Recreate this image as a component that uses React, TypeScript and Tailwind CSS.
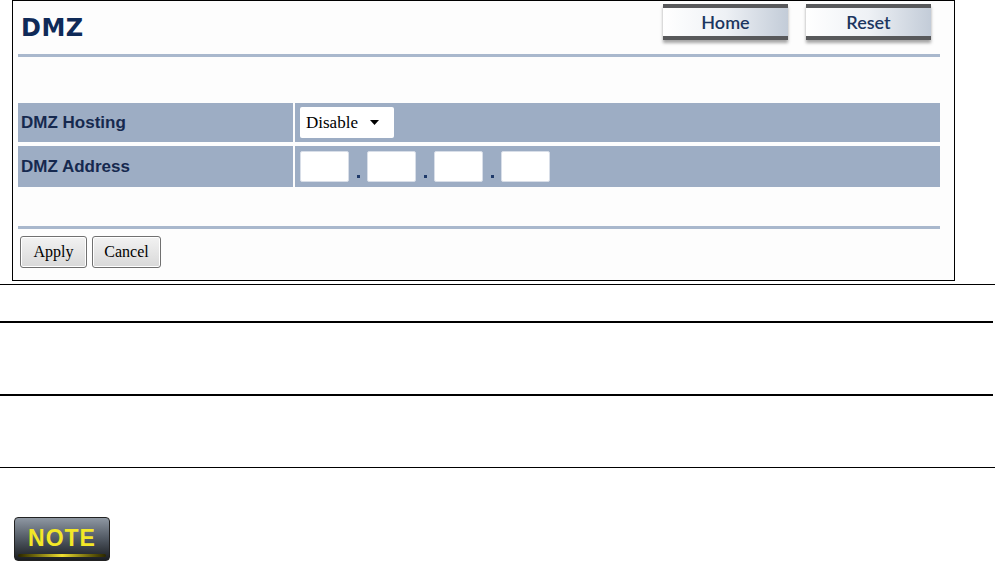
import React from 'react';

const HeadButton: React.FC<{ label: string }> = ({ label }) => (
  <div className="w-[125px] h-[36px] flex flex-col shadow-[0_3px_3px_rgba(0,0,0,0.35)]">
    <div className="h-[4px] bg-[#58595b]" />
    <div className="flex-1 flex items-center justify-center bg-gradient-to-r from-[#ffffff] via-[#eef1f5] to-[#c3ccd8] text-[#1c3660] text-[18px] font-semibold font-['Lato',sans-serif] leading-none">
      {label}
    </div>
    <div className="h-[4px] bg-[#58595b]" />
  </div>
);

const Octet: React.FC = () => (
  <div className="w-[49px] h-[31px] bg-white rounded-[2px] border border-[#d8dee8]" />
);

const Dot: React.FC = () => (
  <div className="w-[18px] h-[31px] flex items-end justify-center pb-[4px]">
    <div className="w-[3px] h-[3px] bg-[#1f3a6a]" />
  </div>
);

const FormButton: React.FC<{ label: string; width: string }> = ({ label, width }) => (
  <div
    className={`${width} h-[32px] flex items-center justify-center rounded-[3px] border border-[#707070] bg-gradient-to-b from-[#f2f2f2] to-[#d9d9d9] text-[16px] text-black font-['Liberation_Serif',serif] shadow-[inset_0_0_0_1px_#ffffff]`}
  >
    {label}
  </div>
);

export default function App() {
  return (
    <div className="w-[995px] h-[562px] bg-white overflow-hidden font-['Liberation_Sans',Arial,sans-serif]">
      <div className="pl-[12px]">
        <div className="w-[943px] h-[281px] border border-black bg-[#fdfdfd]">
          <div className="ml-[5px] w-[922px]">
            {/* header */}
            <div className="h-[53px] flex justify-between">
              <div className="pl-[3px] pt-[13px] text-[24px] leading-[29px] font-bold text-[#0f2a58] font-['DejaVu_Sans',Verdana,sans-serif] tracking-[0.5px]">
                DMZ
              </div>
              <div className="flex gap-[18px] pt-[3px] pr-[9px]">
                <HeadButton label="Home" />
                <HeadButton label="Reset" />
              </div>
            </div>
            <div className="h-[3px] bg-[#a9b8cd]" />

            {/* table */}
            <div className="mt-[46px] flex flex-col gap-[4px]">
              <div className="h-[39px] flex gap-[2px]">
                <div className="w-[275px] bg-[#9dadc4] flex items-center pl-[3px] text-[17px] font-bold text-[#16294f]">
                  DMZ Hosting
                </div>
                <div className="flex-1 bg-[#9dadc4] flex items-center pl-[5px]">
                  <div className="w-[94px] h-[31px] bg-white rounded-[2px] flex items-center pl-[6px] gap-[12px] text-[17px] text-black font-['Liberation_Serif',serif]">
                    <span>Disable</span>
                    <svg width="9" height="5" viewBox="0 0 9 5">
                      <path d="M0 0 L9 0 L4.5 5 Z" fill="#000" />
                    </svg>
                  </div>
                </div>
              </div>
              <div className="h-[41px] flex gap-[2px]">
                <div className="w-[275px] bg-[#9dadc4] flex items-center pl-[3px] text-[17px] font-bold text-[#16294f]">
                  DMZ Address
                </div>
                <div className="flex-1 bg-[#9dadc4] flex items-center pl-[5px]">
                  <Octet />
                  <Dot />
                  <Octet />
                  <Dot />
                  <Octet />
                  <Dot />
                  <Octet />
                </div>
              </div>
            </div>

            <div className="mt-[39px] h-[3px] bg-[#a9b8cd]" />

            <div className="mt-[7px] flex gap-[5px] pl-[2px]">
              <FormButton label="Apply" width="w-[67px]" />
              <FormButton label="Cancel" width="w-[69px]" />
            </div>
          </div>
        </div>
      </div>

      <div className="mt-[3px] h-[1px] bg-black" />
      <div className="mt-[36px] w-[993px] h-[2px] bg-black" />
      <div className="mt-[71px] w-[993px] h-[2px] bg-black" />
      <div className="mt-[71px] w-[995px] h-[1px] bg-black" />

      <div className="mt-[49px] ml-[14px] w-[96px] h-[44px] rounded-[4px] border border-[#222] bg-gradient-to-b from-[#8f98a3] via-[#505862] to-[#1b1e22] flex flex-col items-center justify-end pb-[3px]">
        <div className="text-[23px] leading-[24px] font-bold text-[#f3e727] font-['Liberation_Sans',Arial,sans-serif] tracking-[1px]">
          NOTE
        </div>
        <div className="mt-[4px] w-[88px] h-[3px] bg-gradient-to-r from-[#2a2600] via-[#f0e030] to-[#2a2600] rounded-full" />
      </div>
    </div>
  );
}
